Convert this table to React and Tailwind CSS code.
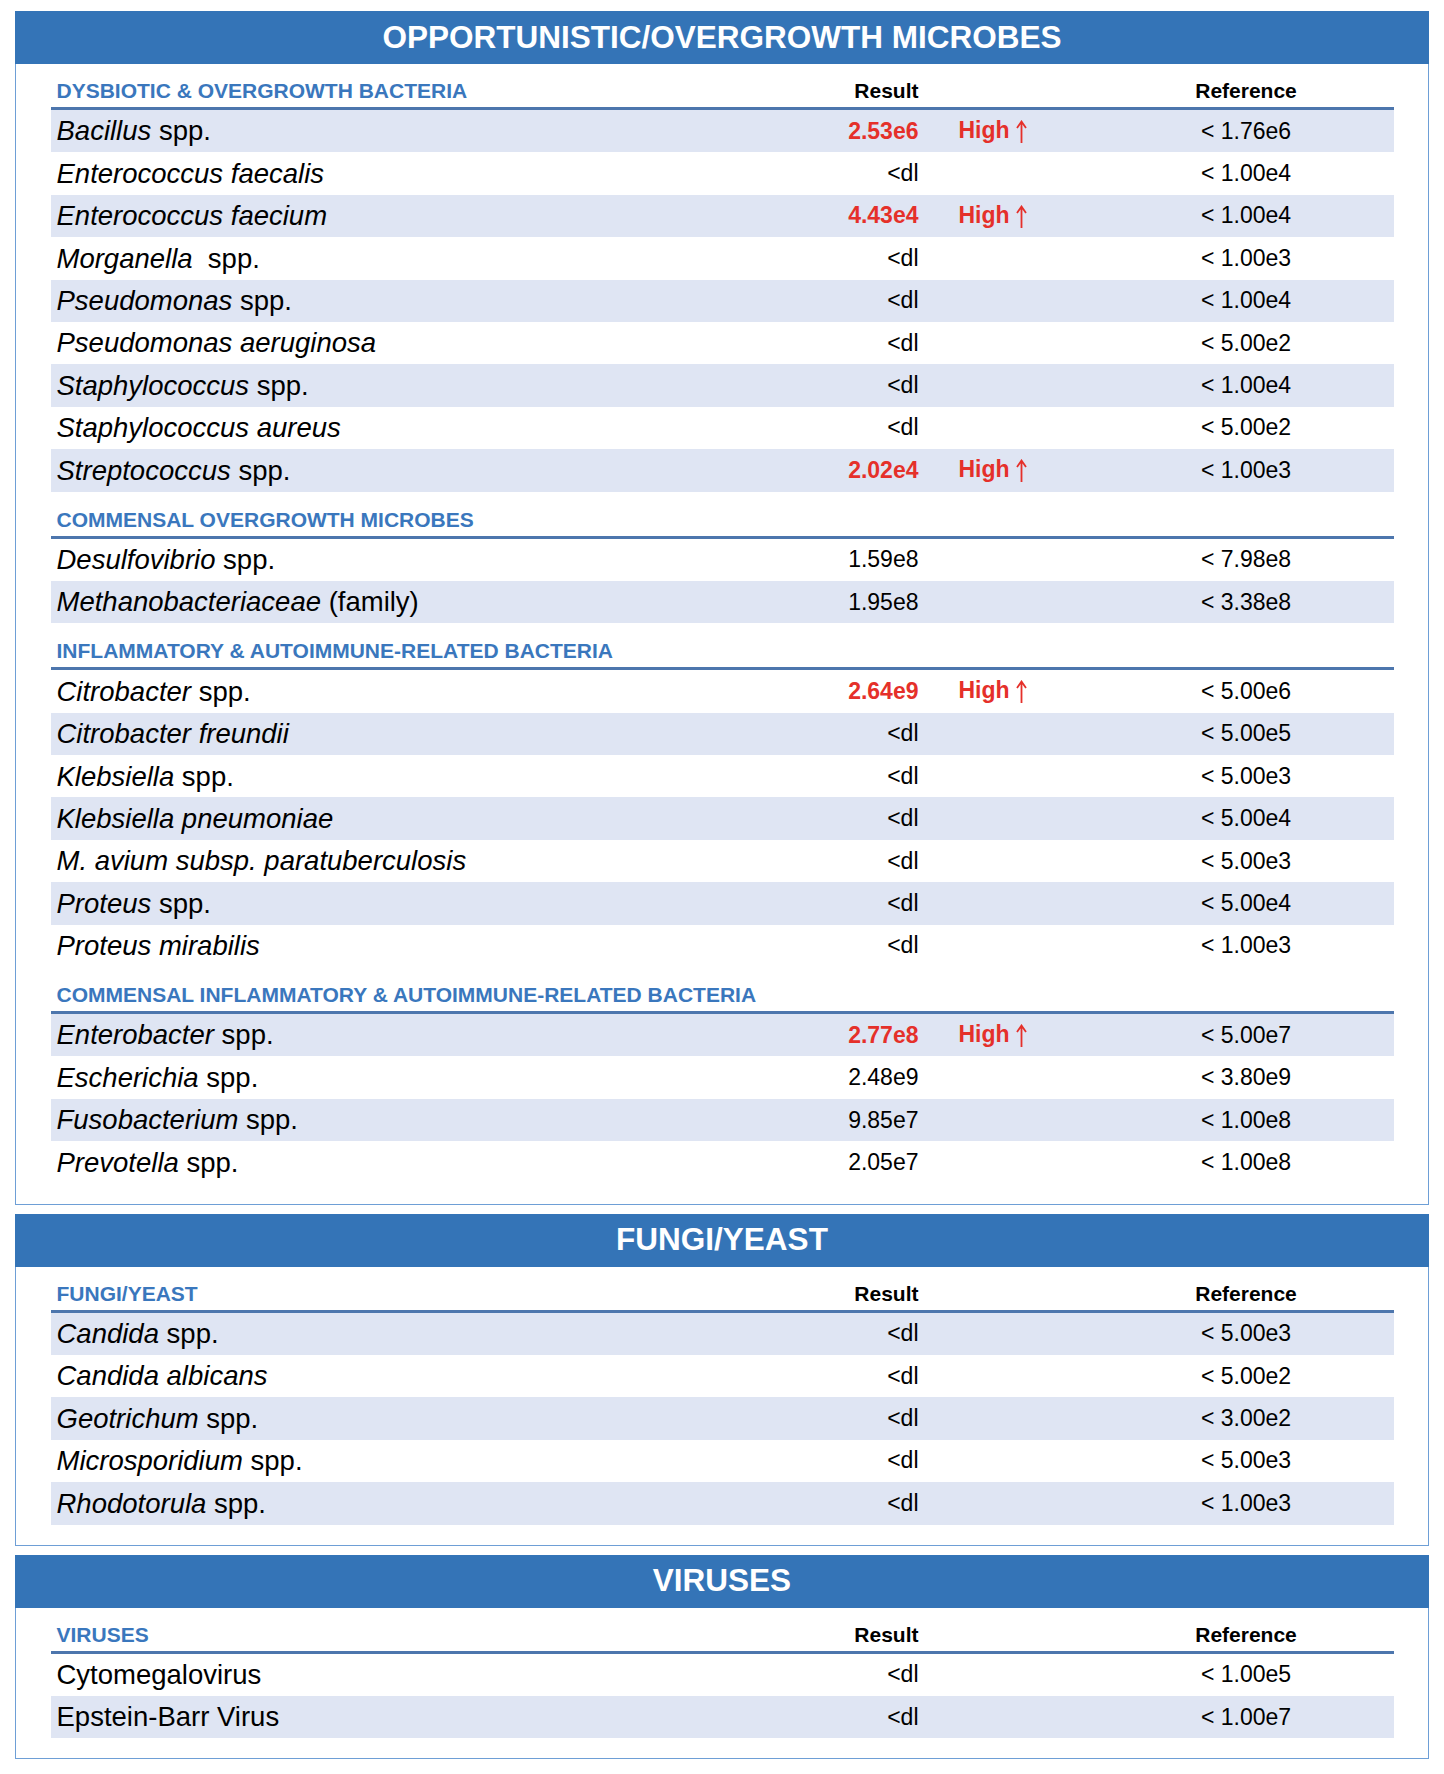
import React from 'react'

const panels = [
  {
    title: 'OPPORTUNISTIC/OVERGROWTH MICROBES',
    sections: [
      {
        label: 'DYSBIOTIC & OVERGROWTH BACTERIA',
        shadeFirst: true,
        rows: [
          { i: 'Bacillus', r: ' spp.', result: '2.53e6', high: true, ref: '< 1.76e6' },
          { i: 'Enterococcus faecalis', result: '<dl', ref: '< 1.00e4' },
          { i: 'Enterococcus faecium', result: '4.43e4', high: true, ref: '< 1.00e4' },
          { i: 'Morganella', r: '\u00a0 spp.', result: '<dl', ref: '< 1.00e3' },
          { i: 'Pseudomonas', r: ' spp.', result: '<dl', ref: '< 1.00e4' },
          { i: 'Pseudomonas aeruginosa', result: '<dl', ref: '< 5.00e2' },
          { i: 'Staphylococcus', r: ' spp.', result: '<dl', ref: '< 1.00e4' },
          { i: 'Staphylococcus aureus', result: '<dl', ref: '< 5.00e2' },
          { i: 'Streptococcus', r: ' spp.', result: '2.02e4', high: true, ref: '< 1.00e3' },
        ],
      },
      {
        label: 'COMMENSAL OVERGROWTH MICROBES',
        shadeFirst: false,
        rows: [
          { i: 'Desulfovibrio', r: ' spp.', result: '1.59e8', ref: '< 7.98e8' },
          { i: 'Methanobacteriaceae', r: ' (family)', result: '1.95e8', ref: '< 3.38e8' },
        ],
      },
      {
        label: 'INFLAMMATORY & AUTOIMMUNE-RELATED BACTERIA',
        shadeFirst: false,
        rows: [
          { i: 'Citrobacter', r: ' spp.', result: '2.64e9', high: true, ref: '< 5.00e6' },
          { i: 'Citrobacter freundii', result: '<dl', ref: '< 5.00e5' },
          { i: 'Klebsiella', r: ' spp.', result: '<dl', ref: '< 5.00e3' },
          { i: 'Klebsiella pneumoniae', result: '<dl', ref: '< 5.00e4' },
          { i: 'M. avium subsp. paratuberculosis', result: '<dl', ref: '< 5.00e3' },
          { i: 'Proteus', r: ' spp.', result: '<dl', ref: '< 5.00e4' },
          { i: 'Proteus mirabilis', result: '<dl', ref: '< 1.00e3' },
        ],
      },
      {
        label: 'COMMENSAL INFLAMMATORY & AUTOIMMUNE-RELATED BACTERIA',
        shadeFirst: true,
        rows: [
          { i: 'Enterobacter', r: ' spp.', result: '2.77e8', high: true, ref: '< 5.00e7' },
          { i: 'Escherichia', r: ' spp.', result: '2.48e9', ref: '< 3.80e9' },
          { i: 'Fusobacterium', r: ' spp.', result: '9.85e7', ref: '< 1.00e8' },
          { i: 'Prevotella', r: ' spp.', result: '2.05e7', ref: '< 1.00e8' },
        ],
      },
    ],
  },
  {
    title: 'FUNGI/YEAST',
    sections: [
      {
        label: 'FUNGI/YEAST',
        shadeFirst: true,
        rows: [
          { i: 'Candida', r: ' spp.', result: '<dl', ref: '< 5.00e3' },
          { i: 'Candida albicans', result: '<dl', ref: '< 5.00e2' },
          { i: 'Geotrichum', r: ' spp.', result: '<dl', ref: '< 3.00e2' },
          { i: 'Microsporidium', r: ' spp.', result: '<dl', ref: '< 5.00e3' },
          { i: 'Rhodotorula', r: ' spp.', result: '<dl', ref: '< 1.00e3' },
        ],
      },
    ],
  },
  {
    title: 'VIRUSES',
    sections: [
      {
        label: 'VIRUSES',
        shadeFirst: false,
        rows: [
          { r: 'Cytomegalovirus', result: '<dl', ref: '< 1.00e5' },
          { r: 'Epstein-Barr Virus', result: '<dl', ref: '< 1.00e7' },
        ],
      },
    ],
  },
]

const cols = 'grid grid-cols-[776px_118px_165px_1fr]'

// thin arrow that follows "High"
const UpArrow = () => (
  <svg width="11" height="23" viewBox="0 0 11 23" className="inline-block align-[-5px] ml-[6px]">
    <path d="M5.5 2 V23 M1 8 L5.5 1.5 L10 8" fill="none" stroke="#e5302a" strokeWidth="1.8" />
  </svg>
)

const SectionHead = ({ label, showCols, first }) => (
  <div className={`${cols} ${first ? 'h-[46px]' : 'h-[47px]'} border-b-[3px] border-[#4d76ad]`}>
    <div className="flex items-end pb-[4px] pl-[6px] text-[21px] leading-[24px] font-bold text-[#3a77bd]">
      {label}
    </div>
    <div className="flex items-end justify-end pb-[4px] pr-[26px] text-[21px] leading-[24px] font-bold text-black">
      {showCols ? 'Result' : ''}
    </div>
    <div></div>
    <div className="flex items-end justify-center pb-[4px] pr-[11px] text-[21px] leading-[24px] font-bold text-black">
      {showCols ? 'Reference' : ''}
    </div>
  </div>
)

const Row = ({ row, shaded }) => (
  <div className={`${cols} h-[42.4px] items-center ${shaded ? 'bg-[#dfe5f3]' : 'bg-white'}`}>
    <div className="pl-[6px] text-[27.5px] leading-none text-black whitespace-nowrap">
      {row.i && <i>{row.i}</i>}
      {row.r}
    </div>
    <div className={`pr-[26px] text-right text-[23px] leading-none ${row.high ? 'font-bold text-[#e5302a]' : 'text-black'}`}>
      {row.result}
    </div>
    <div className="pl-[14px] text-[23px] leading-none text-[#e5302a] whitespace-nowrap">
      {row.high && (
        <>
          <span className="font-bold">High</span>
          <UpArrow />
        </>
      )}
    </div>
    <div className="pr-[11px] text-center text-[23px] leading-none text-black">{row.ref}</div>
  </div>
)

const Panel = ({ panel }) => (
  <div className="flex flex-col">
    <div className="h-[53px] bg-[#3474b7] flex items-center justify-center text-white font-bold text-[31.5px] leading-none">
      {panel.title}
    </div>
    <div className="border-x-[1.5px] border-b-[1.5px] border-[#6e9fd6] px-[34.5px] pb-[20px]">
      {panel.sections.map((s, si) => (
        <div key={s.label}>
          <SectionHead label={s.label} showCols={si === 0} first={si === 0} />
          {s.rows.map((row, ri) => (
            <Row key={ri} row={row} shaded={s.shadeFirst ? ri % 2 === 0 : ri % 2 === 1} />
          ))}
        </div>
      ))}
    </div>
  </div>
)

export default function App() {
  return (
    <div
      className="w-[1444px] min-h-[1774px] bg-white px-[15px] pt-[11px] flex flex-col gap-[9px]"
      style={{ fontFamily: '"Liberation Sans", Arial, sans-serif' }}
    >
      {panels.map((p) => (
        <Panel key={p.title} panel={p} />
      ))}
    </div>
  )
}
